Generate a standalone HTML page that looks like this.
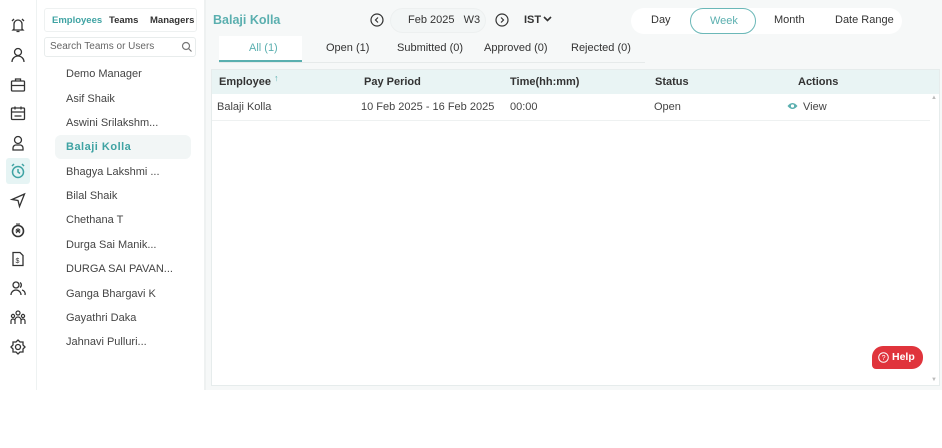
<!DOCTYPE html>
<html><head><style>
*{box-sizing:border-box;margin:0;padding:0}
body{width:942px;height:448px;background:#fff;font-family:"Liberation Sans",sans-serif;position:relative;overflow:hidden;color:#333}
.abs{position:absolute}
.rail{left:0;top:0;width:37px;height:390px;background:#fff;border-right:1px solid #eef2f2}
.ic{position:absolute;left:9px;width:18px;height:18px}
.side{left:38px;top:0;width:166px;height:390px;background:#fff}
.gap{left:204px;top:0;width:6px;height:390px;background:#eef1f1}
.main{left:206px;top:0;width:736px;height:390px;background:#f6f8f8}
.emp{position:absolute;left:66px;font-size:11px;color:#444}
.tab{position:absolute;top:42px;font-size:11px;color:#333}
</style></head><body>
<div class="abs rail">
<svg class="ic" style="top:16px" viewBox="0 0 18 18" fill="none" stroke="#333" stroke-width="1.3"><path d="M5 13V8a4 4 0 018 0v5l1 1H4z M7.5 15.5h3 M3 5l2-2 M15 5l-2-2"/></svg>
<svg class="ic" style="top:46px" viewBox="0 0 18 18" fill="none" stroke="#333" stroke-width="1.3"><circle cx="9" cy="6" r="3.5"/><path d="M3 16a6 6 0 0112 0"/></svg>
<svg class="ic" style="top:76px" viewBox="0 0 18 18" fill="none" stroke="#333" stroke-width="1.3"><rect x="2.5" y="5" width="13" height="10" rx="1"/><path d="M6.5 5V3h5v2 M2.5 9.5h13"/></svg>
<svg class="ic" style="top:104px" viewBox="0 0 18 18" fill="none" stroke="#333" stroke-width="1.3"><rect x="2.5" y="4" width="13" height="11.5" rx="1"/><path d="M2.5 8h13 M6 2.5v3 M12 2.5v3 M5.5 12h7"/></svg>
<svg class="ic" style="top:134px" viewBox="0 0 18 18" fill="none" stroke="#333" stroke-width="1.3"><circle cx="9" cy="6" r="3.5"/><path d="M4 16v-2a3 3 0 013-3h4a3 3 0 013 3v2z"/></svg>
<div class="abs" style="left:6px;top:158px;width:24px;height:26px;background:#e6f4f4;border-radius:3px"></div>
<svg class="ic" style="top:162px" viewBox="0 0 18 18" fill="none" stroke="#3fa3a3" stroke-width="1.5"><circle cx="9" cy="10" r="5.5"/><path d="M9 7v3l2 1.5 M3 4l2-2 M15 4l-2-2"/></svg>
<svg class="ic" style="top:191px" viewBox="0 0 18 18" fill="none" stroke="#333" stroke-width="1.3"><path d="M15.5 3L3 8.5l6 1 1.5 6z"/></svg>
<svg class="ic" style="top:221px" viewBox="0 0 18 18" fill="none" stroke="#333" stroke-width="1.6"><circle cx="9" cy="10" r="5.5"/><path d="M7 3h4 M9 7v3 M6.5 10h5 M7 8l4 4 M11 8l-4 4" stroke-width="1"/></svg>
<svg class="ic" style="top:250px" viewBox="0 0 18 18" fill="none" stroke="#333" stroke-width="1.3"><path d="M4 2.5h7l3 3v10H4z"/><text x="6.5" y="13" font-size="7" fill="#333" stroke="none">$</text></svg>
<svg class="ic" style="top:279px" viewBox="0 0 18 18" fill="none" stroke="#333" stroke-width="1.3"><circle cx="7" cy="6" r="3"/><path d="M2 16a5 5 0 0110 0 M11 3.5a3 3 0 010 5 M13 11a4 4 0 013 5"/></svg>
<svg class="ic" style="top:309px" viewBox="0 0 18 18" fill="none" stroke="#333" stroke-width="1.2"><circle cx="9" cy="4" r="2"/><circle cx="4" cy="7" r="1.6"/><circle cx="14" cy="7" r="1.6"/><path d="M6 15v-4a3 3 0 016 0v4 M2 15v-3a2 2 0 014 0 M12 12a2 2 0 014 0v3"/></svg>
<svg class="ic" style="top:338px" viewBox="0 0 18 18" fill="none" stroke="#333" stroke-width="1.3"><circle cx="9" cy="9" r="2.5"/><path d="M9 2l2 2h3v3l2 2-2 2v3h-3l-2 2-2-2H4v-3l-2-2 2-2V4h3z"/></svg>
</div>
<div class="abs side">
<div class="abs" style="left:6px;top:8px;width:153px;height:24px;border:1px solid #eef1f1;border-radius:3px"></div>
<div class="abs" style="left:14px;top:15px;font-size:9.5px;color:#3fa3a3;font-weight:bold">Employees</div>
<div class="abs" style="left:71px;top:15px;font-size:9.5px;color:#333;font-weight:bold">Teams</div>
<div class="abs" style="left:112px;top:15px;font-size:9.5px;color:#333;font-weight:bold">Managers</div>
<div class="abs" style="left:6px;top:37px;width:152px;height:20px;border:1px solid #e8ecec;border-radius:3px"></div>
<div class="abs" style="left:12px;top:41px;font-size:10px;color:#666">Search Teams or Users</div>
<svg class="abs" style="left:143px;top:41px" width="12" height="12" viewBox="0 0 12 12" fill="none" stroke="#777" stroke-width="1.2"><circle cx="5" cy="5" r="3.5"/><path d="M7.5 7.5l3 3"/></svg>
<div class="abs" style="left:17px;top:135px;width:136px;height:24px;background:#f2f6f6;border-radius:6px"></div>
</div>
<div class="emp" style="top:68px">Demo Manager</div>
<div class="emp" style="top:93px">Asif Shaik</div>
<div class="emp" style="top:117px">Aswini Srilakshm...</div>
<div class="emp" style="top:141px;color:#3fa3a3;font-weight:bold;letter-spacing:.5px">Balaji Kolla</div>
<div class="emp" style="top:166px">Bhagya Lakshmi ...</div>
<div class="emp" style="top:190px">Bilal Shaik</div>
<div class="emp" style="top:214px">Chethana T</div>
<div class="emp" style="top:239px">Durga Sai Manik...</div>
<div class="emp" style="top:263px">DURGA SAI PAVAN...</div>
<div class="emp" style="top:288px">Ganga Bhargavi K</div>
<div class="emp" style="top:312px">Gayathri Daka</div>
<div class="emp" style="top:336px">Jahnavi Pulluri...</div>
<div class="abs gap"></div>
<div class="abs main"></div>
<div class="abs" style="left:213px;top:13px;font-size:12.5px;font-weight:bold;color:#5aafaf">Balaji Kolla</div>
<svg class="abs" style="left:370px;top:13px" width="14" height="14" viewBox="0 0 14 14" fill="none" stroke="#333" stroke-width="1.2"><circle cx="7" cy="7" r="6"/><path d="M8 4.5L5.5 7 8 9.5"/></svg>
<div class="abs" style="left:390px;top:8px;width:96px;height:25px;background:#f3f6f6;border-radius:13px;border:1px solid #edf0f0"></div>
<div class="abs" style="left:408px;top:14px;font-size:11px">Feb 2025 &nbsp; W3</div>
<svg class="abs" style="left:495px;top:13px" width="14" height="14" viewBox="0 0 14 14" fill="none" stroke="#333" stroke-width="1.2"><circle cx="7" cy="7" r="6"/><path d="M6 4.5L8.5 7 6 9.5"/></svg>
<div class="abs" style="left:524px;top:14px;font-size:11px;font-weight:bold">IST</div>
<svg class="abs" style="left:543px;top:16px" width="9" height="6" viewBox="0 0 9 6" fill="none" stroke="#333" stroke-width="1.6"><path d="M1 1l3.5 3.5L8 1"/></svg>
<div class="abs" style="left:631px;top:8px;width:271px;height:26px;background:#fff;border-radius:13px"></div>
<div class="abs" style="left:690px;top:8px;width:66px;height:26px;border:1.3px solid #6bb8b8;border-radius:13px"></div>
<div class="abs" style="left:651px;top:14px;font-size:11px">Day</div>
<div class="abs" style="left:710px;top:15px;font-size:11px;color:#5aafaf">Week</div>
<div class="abs" style="left:774px;top:14px;font-size:11px">Month</div>
<div class="abs" style="left:835px;top:14px;font-size:11px">Date Range</div>
<div class="abs" style="left:219px;top:36px;width:83px;height:26px;background:#fff;border-bottom:2px solid #5aafaf"></div>
<div class="abs" style="left:219px;top:62px;width:426px;height:1px;background:#e6eaea"></div>
<div class="tab" style="left:249px;color:#5aafaf">All (1)</div>
<div class="tab" style="left:326px">Open (1)</div>
<div class="tab" style="left:397px">Submitted (0)</div>
<div class="tab" style="left:484px">Approved (0)</div>
<div class="tab" style="left:571px">Rejected (0)</div>
<div class="abs" style="left:211px;top:69px;width:729px;height:317px;background:#fff;border:1px solid #e6ecec"></div>
<div class="abs" style="left:212px;top:70px;width:727px;height:24px;background:#e9f4f4"></div>
<div class="abs" style="left:219px;top:76px;font-size:11px;font-weight:bold">Employee</div>
<div class="abs" style="left:274px;top:73px;font-size:9px;color:#5aafaf">↑</div>
<div class="abs" style="left:364px;top:76px;font-size:11px;font-weight:bold">Pay Period</div>
<div class="abs" style="left:510px;top:76px;font-size:11px;font-weight:bold">Time(hh:mm)</div>
<div class="abs" style="left:655px;top:76px;font-size:11px;font-weight:bold">Status</div>
<div class="abs" style="left:798px;top:76px;font-size:11px;font-weight:bold">Actions</div>
<div class="abs" style="left:217px;top:101px;font-size:11px;color:#444">Balaji Kolla</div>
<div class="abs" style="left:361px;top:101px;font-size:11px;color:#444">10 Feb 2025 - 16 Feb 2025</div>
<div class="abs" style="left:510px;top:101px;font-size:11px;color:#444">00:00</div>
<div class="abs" style="left:654px;top:101px;font-size:11px;color:#444">Open</div>
<svg class="abs" style="left:787px;top:102px" width="11" height="8" viewBox="0 0 11 8"><path d="M0.5 4Q5.5 -2 10.5 4Q5.5 10 0.5 4z" fill="#5aafaf"/><circle cx="5.5" cy="4" r="1.6" fill="#fff"/></svg>
<div class="abs" style="left:803px;top:101px;font-size:11px;color:#444">View</div>
<div class="abs" style="left:212px;top:120px;width:718px;height:1px;background:#eef1f1"></div>
<div class="abs" style="left:931px;top:95px;font-size:6px;color:#bbb">▲</div>
<div class="abs" style="left:931px;top:377px;font-size:6px;color:#bbb">▼</div>
<div class="abs" style="left:872px;top:346px;width:51px;height:23px;background:#e0343c;border-radius:11px 11px 11px 4px"></div>
<svg class="abs" style="left:878px;top:352px" width="11" height="11" viewBox="0 0 11 11" fill="none" stroke="#fff" stroke-width="1"><circle cx="5.5" cy="5.5" r="4.8"/><text x="3.6" y="8" font-size="7" fill="#fff" stroke="none" font-family="Liberation Sans">?</text></svg>
<div class="abs" style="left:892px;top:351px;font-size:10.5px;color:#fff;font-weight:bold">Help</div>
</body></html>
